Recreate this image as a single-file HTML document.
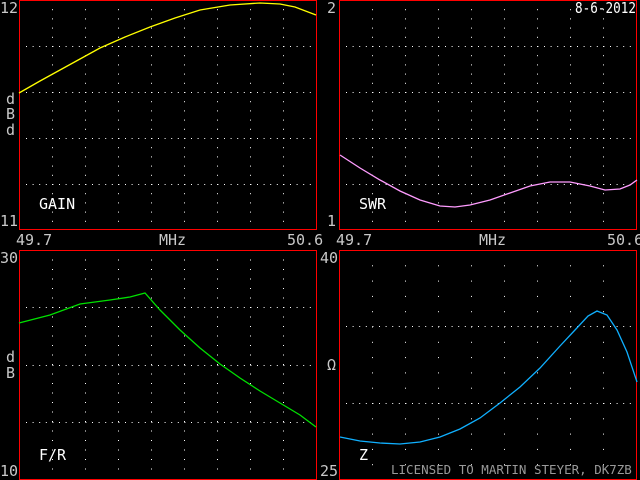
<!DOCTYPE html>
<html><head><meta charset="utf-8"><style>
html,body{margin:0;padding:0;background:#000;width:640px;height:480px;overflow:hidden}
svg text{font-family:"DejaVu Sans Mono","Liberation Mono",monospace;font-size:15px;fill:#c8c8c8}
</style></head><body>
<svg width="640" height="480" xmlns="http://www.w3.org/2000/svg">
<rect x="19.5" y="0.5" width="297" height="229" fill="none" stroke="#f00"/>
<rect x="339.5" y="0.5" width="297" height="229" fill="none" stroke="#f00"/>
<rect x="19.5" y="250.5" width="297" height="229" fill="none" stroke="#f00"/>
<rect x="339.5" y="250.5" width="297" height="229" fill="none" stroke="#f00"/>
<polyline fill="none" stroke="#ffff00" stroke-width="1.3" points="19,93 40,81 60,70 80,59 100,48 125,37 150,27 175,18 200,10 230,5 260,3 280,4 295,7 316,15"/>
<polyline fill="none" stroke="#ff9cff" stroke-width="1.3" points="340,155 360,168 380,180 400,191 420,200 440,206 455,207 470,205 490,200 510,193 530,186 550,182 570,182 590,186 605,190 620,189 630,185 637,180"/>
<polyline fill="none" stroke="#00e000" stroke-width="1.3" points="19,323 50,315 80,304 110,300 130,297 145,293 160,310 180,330 200,348 220,364 240,378 260,391 280,403 300,415 316,427"/>
<polyline fill="none" stroke="#10b0ff" stroke-width="1.3" points="340,437 360,441 380,443 400,444 420,442 440,437 460,429 480,418 500,403 520,387 540,368 560,346 575,330 588,316 597,311 607,315 617,330 627,352 637,382"/>
<text x="0" y="13">12</text><text x="0" y="226">11</text>
<text x="6" y="104">d</text><text x="6" y="119">B</text><text x="6" y="135">d</text>
<text x="39" y="209" style="fill:#fff">GAIN</text>
<text x="16" y="245">49.7</text><text x="159" y="245">MHz</text><text x="287" y="245">50.6</text>
<text x="327" y="13">2</text><text x="327" y="226">1</text>
<text x="359" y="209" style="fill:#fff">SWR</text>
<text x="336" y="245">49.7</text><text x="479" y="245">MHz</text><text x="607" y="245">50.6</text>
<text x="575" y="13" textLength="61" lengthAdjust="spacingAndGlyphs" style="fill:#fff">8-6-2012</text>
<text x="0" y="263">30</text><text x="0" y="476">10</text>
<text x="6" y="362">d</text><text x="6" y="378">B</text>
<text x="39" y="460" style="fill:#fff">F/R</text>
<text x="320" y="263">40</text><text x="320" y="476">25</text>
<text x="327" y="370">Ω</text>
<text x="359" y="460" style="fill:#fff">Z</text>
<text x="391" y="474" style="font-size:12.5px;fill:#999">LICENSED TO MARTIN STEYER, DK7ZB</text>
</svg>
<script>
(function(){
var s=document.querySelector('svg'),ns='http://www.w3.org/2000/svg',h='';
function dot(x,y){h+='<rect x="'+x.toFixed(1)+'" y="'+y.toFixed(1)+'" width="1" height="1" fill="#fff"/>';}
function panel(x0,y0,hl,vstep){
 for(var k=1;k<=8;k++){var x=x0+33*k;for(var y=y0+vstep;y<y0+228;y+=vstep)dot(x,y);}
 hl.forEach(function(y){for(var x=x0+7;x<x0+297;x+=6.6)dot(x,y);});
}
panel(19,0,[46,92,138,184],9.2);
panel(339,0,[46,92,138,184],9.2);
panel(19,250,[307,365,422],9.5);
panel(339,250,[326,403],15.3);
var g=document.createElementNS(ns,'g');g.innerHTML=h;s.insertBefore(g,s.firstChild);
})();
</script>
</body></html>
